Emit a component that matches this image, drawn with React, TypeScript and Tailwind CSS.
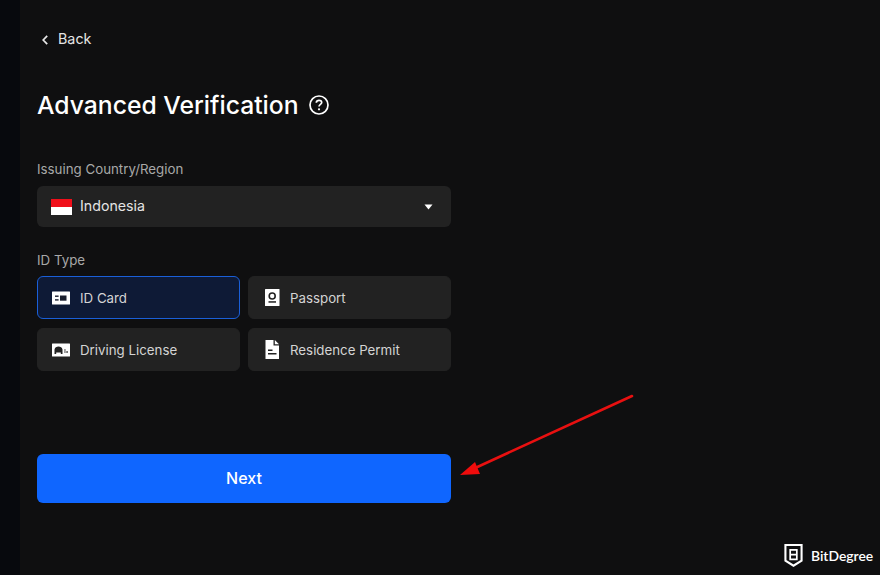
import React from "react";

const font = { fontFamily: "Inter, 'Liberation Sans', sans-serif" };

function IdCardIcon() {
  return (
    <svg width="18" height="14" viewBox="0 0 18 14" className="shrink-0">
      <rect x="0" y="0.5" width="18" height="13" fill="#fff" rx="0.5" />
      <rect x="3" y="4.5" width="3.6" height="1.4" fill="#1a1f2e" />
      <rect x="3" y="8.2" width="3.6" height="1.4" fill="#1a1f2e" />
      <rect x="8" y="4.5" width="6.5" height="5.2" fill="#1a1f2e" />
    </svg>
  );
}
function PassportIcon() {
  return (
    <svg width="16" height="17" viewBox="0 0 16 17" className="shrink-0">
      <rect x="1" y="0" width="14.5" height="17" fill="#fff" rx="0.5" />
      <circle cx="8.2" cy="7" r="3" fill="none" stroke="#222" strokeWidth="1.6" />
      <rect x="4.5" y="12.2" width="7.5" height="1.5" fill="#222" />
    </svg>
  );
}
function LicenseIcon() {
  return (
    <svg width="18" height="14" viewBox="0 0 18 14" className="shrink-0">
      <rect x="0" y="0.5" width="18" height="13" fill="#fff" rx="0.5" />
      <path d="M2.5 11V6.5C3 4.3 4.5 3.5 6.5 3.5S10 4.3 10.5 6.5V11H8.8V9.6H4.2V11Z" fill="#222" />
      <rect x="12.3" y="6" width="1.3" height="4" fill="#777" />
      <rect x="14.2" y="8" width="1.8" height="2" fill="#777" />
    </svg>
  );
}
function PermitIcon() {
  return (
    <svg width="16" height="19" viewBox="0 0 16 19" className="shrink-0">
      <path d="M1.5 0H9.5V5.5H15V19H1.5Z" fill="#fff" />
      <path d="M10.8 0L15 4.2H10.8Z" fill="#fff" />
      <rect x="4" y="9.5" width="4.5" height="1.5" fill="#222" />
      <rect x="4" y="13" width="8.5" height="1.5" fill="#222" />
    </svg>
  );
}

function TypeCard({ icon, label, active, narrow }: { icon: React.ReactNode; label: string; active?: boolean; narrow?: boolean }) {
  return (
    <div
      className={
        active
          ? "flex h-[43px] items-center gap-[10px] rounded-md border border-[#1a5fd8] bg-[#0e1a36] pl-[14px]"
          : narrow
            ? "flex h-[43px] items-center gap-[9px] rounded-md border border-[#222222] bg-[#222222] pl-[14px]"
            : "flex h-[43px] items-center gap-[10px] rounded-md border border-[#222222] bg-[#222222] pl-[14px]"
      }
    >
      <div className="flex w-[18px] justify-center">{icon}</div>
      <span className="pt-[2px] text-[13.3px] leading-none text-[#d4d4d4]">{label}</span>
    </div>
  );
}

export default function App() {
  return (
    <div className="relative flex h-[575px] w-[880px] overflow-hidden bg-[#0f0f10]" style={font}>
      <div className="h-full w-[20px] shrink-0 bg-[#07090d]" />
      <main className="flex w-[431px] flex-col pl-[17px]">
        <div className="mt-[31px] flex h-[17px] items-center text-[#e4e4e4]">
          <svg width="12" height="12" viewBox="0 0 12 12" className="ml-[2px]" fill="none" stroke="#e8e8e8" strokeWidth="1.7">
            <path d="M8.2 1.8L4.2 6L8.2 10.2" />
          </svg>
          <span className="ml-[7px] text-[14.3px] leading-none">Back</span>
        </div>
        <div className="mt-[39px] flex h-[36px] items-center">
          <h1 className="text-[24.7px] font-medium leading-none text-white">Advanced Verification</h1>
          <svg width="22" height="22" viewBox="0 0 22 22" className="ml-[9px]" fill="none">
            <circle cx="11" cy="11" r="9" stroke="#fff" strokeWidth="1.7" />
            <path d="M8.3 8.8C8.3 7.2 9.5 6.3 11 6.3C12.5 6.3 13.7 7.2 13.7 8.6C13.7 10.4 11 10.5 11 12.6" stroke="#fff" strokeWidth="1.7" />
            <circle cx="11" cy="15.3" r="1.1" fill="#fff" />
          </svg>
        </div>
        <label className="mt-[38px] block h-[17px] text-[13.3px] leading-[17px] text-[#a8a8a8]">Issuing Country/Region</label>
        <div className="mt-[8px] flex h-[41px] items-center rounded-md bg-[#222222] pl-[14px] pr-[18px]">
          <div className="flex h-[16px] w-[21px] flex-col overflow-hidden">
            <div className="h-1/2 bg-[#f00f1a]" />
            <div className="h-1/2 bg-white" />
          </div>
          <span className="ml-[8px] flex-1 text-[14.2px] leading-none text-[#e4e4e4]">Indonesia</span>
          <svg width="9" height="6" viewBox="0 0 9 6">
            <path d="M0.5 0.5H8.5L4.5 5.5Z" fill="#fff" />
          </svg>
        </div>
        <label className="mt-[25px] block h-[17px] text-[13.3px] leading-[17px] text-[#a8a8a8]">ID Type</label>
        <div className="mt-[7px] grid w-[414px] grid-cols-2 gap-x-[8px] gap-y-[9px]">
          <TypeCard icon={<IdCardIcon />} label="ID Card" active />
          <TypeCard icon={<PassportIcon />} label="Passport" narrow />
          <TypeCard icon={<LicenseIcon />} label="Driving License" />
          <TypeCard icon={<PermitIcon />} label="Residence Permit" narrow />
        </div>
        <button className="mt-[83px] flex h-[49px] w-[414px] items-center justify-center rounded-md bg-[#0f66ff] pb-[2px] text-base font-medium text-white">
          Next
        </button>
      </main>

      <svg className="absolute left-[455px] top-[390px]" width="185" height="90" viewBox="0 0 185 90" fill="none">
        <path d="M177 6L18 79" stroke="#e81010" strokeWidth="2.6" strokeLinecap="round" />
        <path d="M5 85L20 72L25 84Z" fill="#f00c0c" />
      </svg>

      <div className="absolute left-[784px] top-[543px] flex items-center gap-[8px]">
        <svg width="19" height="25" viewBox="0 0 20 25" fill="none">
          <path d="M1.5 1.5H18.5V18L10 23.3L1.5 18Z" stroke="#fff" strokeWidth="2.2" />
          <path d="M6.5 6.5H13.5V16.5H6.5ZM6.5 11.5H13.5" stroke="#fff" strokeWidth="1.8" />
        </svg>
        <span className="text-[13.9px] font-semibold leading-none text-white" style={{ fontFamily: "Lato, Inter, sans-serif" }}>BitDegree</span>
      </div>
    </div>
  );
}
